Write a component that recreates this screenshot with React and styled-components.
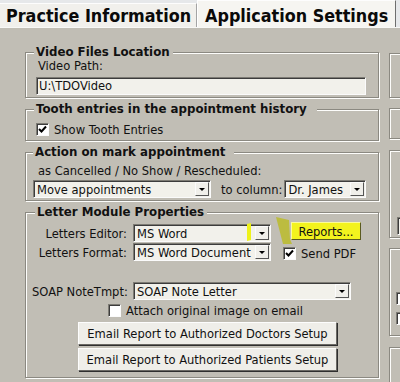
import React from "react";
import styled, { createGlobalStyle } from "styled-components";

const GlobalStyle = createGlobalStyle`
  html, body {
    margin: 0;
    padding: 0;
    background: #c1beb5;
  }
  body {
    font-family: "DejaVu Sans Condensed", "DejaVu Sans", sans-serif;
    font-size: 12.8px;
    color: #111;
    overflow: hidden;
  }
`;

function App() {
    return (
        <Window>
            <GlobalStyle />
            <TabStrip>
                <Tab>Practice Information</Tab>
                <Tab $active>Application Settings</Tab>
            </TabStrip>
            <Content>
                <LeftColumn>
                    <GroupBox $pb={2}>
                        <Legend>Video Files Location</Legend>
                        <FieldLabel>Video Path:</FieldLabel>
                        <TextInput $w={330}>U:\TDOVideo</TextInput>
                    </GroupBox>

                    <GroupBox $pb={3}>
                        <Legend $trail={10}>Tooth entries in the appointment history</Legend>
                        <CheckRow $mt={6} $ml={2}>
                            <CheckBox checked />
                            Show Tooth Entries
                        </CheckRow>
                    </GroupBox>

                    <GroupBox $pb={2} $pl={7}>
                        <Legend $trail={9}>Action on mark appointment</Legend>
                        <SubLabel>as Cancelled / No Show / Rescheduled:</SubLabel>
                        <ActionRow>
                            <Select $w={178} value="Move appointments" />
                            <InlineLabel>to column:</InlineLabel>
                            <Select $w={82} value="Dr. James" />
                        </ActionRow>
                    </GroupBox>

                    <GroupBox $pb={6} $pl={6}>
                        <Legend $indent={3}>Letter Module Properties</Legend>
                        <LetterTop>
                            <FormGrid>
                                <RowLabel>Letters Editor:</RowLabel>
                                <Select $w={138} value="MS Word" />
                                <RowLabel>Letters Format:</RowLabel>
                                <Select $w={138} value="MS Word Document" />
                            </FormGrid>
                            <ReportSide>
                                <ReportsButton>Reports...</ReportsButton>
                                <CheckRow $mt={6}>
                                    <CheckBox checked />
                                    Send PDF
                                </CheckRow>
                            </ReportSide>
                        </LetterTop>
                        <FormGrid $mt={21}>
                            <RowLabel>SOAP NoteTmpt:</RowLabel>
                            <Select $w={218} value="SOAP Note Letter" />
                        </FormGrid>
                        <CheckRow $mt={3} $ml={76}>
                            <CheckBox />
                            Attach original image on email
                        </CheckRow>
                        <ButtonStack>
                            <PushButton>Email Report to Authorized Doctors Setup</PushButton>
                            <PushButton>Email Report to Authorized Patients Setup</PushButton>
                        </ButtonStack>
                        <Highlighter viewBox="0 0 60 40" aria-hidden="true">
                            <path d="M0 11 L4 10 L4 27 L0 28 Z" fill="#eef21a" />
                            <path d="M29 4 L42 7 L43 26 L45 31 L36 31 Z" fill="#bcbc36" opacity="0.92" />
                        </Highlighter>
                    </GroupBox>
                </LeftColumn>

                <RightColumn>
                    <GroupBox as="div" $h={45} $mt={8} />
                    <GroupBox as="div" $h={31} $mt={10} />
                    <GroupBox as="div" $h={88} $mt={11} $pl={0}>
                        <SideSelect />
                    </GroupBox>
                    <GroupBox as="div" $h={88} $mt={10} $pl={0}>
                        <SideChecks>
                            <CheckBox />
                            <CheckBox />
                        </SideChecks>
                    </GroupBox>
                    <GroupBox as="div" $h={60} $mt={11} />
                </RightColumn>
            </Content>
        </Window>
    );
}

function Select({ $w, value }) {
    return (
        <SelectField $w={$w}>
            <SelectValue>{value}</SelectValue>
            <DropButton>
                <Arrow />
            </DropButton>
        </SelectField>
    );
}

function CheckBox({ checked }) {
    return (
        <CheckFrame>
            {checked && (
                <svg width="9" height="9" viewBox="0 0 9 9">
                    <path d="M1 4 L3.5 6.5 L8 1.5" stroke="#000" strokeWidth="2" fill="none" />
                </svg>
            )}
        </CheckFrame>
    );
}

const Window = styled.div`
    width: 400px;
    height: 382px;
    display: flex;
    flex-direction: column;
    overflow: hidden;
    background: #c1beb5;
`;

const TabStrip = styled.div`
    display: flex;
    align-items: flex-end;
    height: 27px;
    background: #e6e8ea;
    flex-shrink: 0;
`;

const Tab = styled.div`
    box-sizing: border-box;
    height: ${(p) => (p.$active ? 27 : 24)}px;
    padding: ${(p) => (p.$active ? "3px 7px 0 7px" : "0 5px 0 6px")};
    display: flex;
    align-items: center;
    font-size: 17.8px;
    font-weight: bold;
    color: #0a0a0a;
    background: ${(p) => (p.$active ? "#f6f5f1" : "#f1f0ec")};
    border-top: 1px solid #fdfdfd;
    border-right: 1px solid ${(p) => (p.$active ? "#6e6e6e" : "#a4a4a4")};
    border-left: ${(p) => (p.$active ? "1px solid #fff" : "none")};
    white-space: nowrap;
`;

const Content = styled.div`
    flex: 1;
    display: flex;
    gap: 10px;
    padding: 17px 0 0 25px;
    border-top: 1px solid #f8f8f6;
    min-height: 0;
`;

const LeftColumn = styled.div`
    width: 354px;
    flex-shrink: 0;
    display: flex;
    flex-direction: column;
    gap: 4px;
`;

const RightColumn = styled.div`
    width: 220px;
    flex-shrink: 0;
    display: flex;
    flex-direction: column;
`;

const GroupBox = styled.fieldset`
    position: relative;
    box-sizing: border-box;
    margin: ${(p) => (p.$mt ? `${p.$mt}px 0 0` : 0)};
    padding: 0 8px ${(p) => p.$pb || 0}px ${(p) => p.$pl ?? 8}px;
    min-width: 0;
    height: ${(p) => (p.$h ? `${p.$h}px` : "auto")};
    border: 1px solid #8b8981;
    box-shadow: 1px 1px 0 #fdfdfb, inset 1px 1px 0 #fdfdfb;
    flex-shrink: 0;
`;

const Legend = styled.legend`
    margin-left: ${(p) => p.$indent || 0}px;
    padding: 0 ${(p) => p.$trail || 3}px 0 2px;
    line-height: 14px;
    font-family: "DejaVu Sans", sans-serif;
    font-size: 11.8px;
    font-weight: bold;
    background: #c1beb5;
`;

const FieldLabel = styled.div`
    line-height: 14px;
    margin-left: 4px;
`;

const SubLabel = styled.div`
    line-height: 14px;
    margin: 5px 0 0 5px;
`;

const TextInput = styled.div`
    box-sizing: border-box;
    width: ${(p) => p.$w}px;
    height: 18px;
    margin: 4px 0 0 2px;
    padding: 0 2px;
    line-height: 16px;
    background: #f2f1eb;
    border: 1px solid;
    border-color: #7d7b74 #fbfbfb #fbfbfb #7d7b74;
    box-shadow: inset 1px 1px 0 #3c3c3c;
`;

const CheckRow = styled.label`
    display: flex;
    align-items: center;
    gap: 5px;
    height: 15px;
    margin: ${(p) => p.$mt || 0}px 0 0 ${(p) => p.$ml || 0}px;
    white-space: nowrap;
`;

const CheckFrame = styled.span`
    box-sizing: border-box;
    width: 13px;
    height: 13px;
    flex-shrink: 0;
    display: flex;
    align-items: center;
    justify-content: center;
    background: #fff;
    border: 1px solid;
    border-color: #7d7b74 #fbfbfb #fbfbfb #7d7b74;
    box-shadow: inset 1px 1px 0 #3c3c3c;
`;

const ActionRow = styled.div`
    display: flex;
    align-items: center;
    margin-top: 2px;
`;

const InlineLabel = styled.span`
    margin: 0 2px 0 10px;
    white-space: nowrap;
`;

const SelectField = styled.div`
    box-sizing: border-box;
    width: ${(p) => p.$w}px;
    height: 18px;
    display: flex;
    align-items: center;
    padding: 1px;
    background: #f2f1eb;
    border: 1px solid;
    border-color: #7d7b74 #fbfbfb #fbfbfb #7d7b74;
    box-shadow: inset 1px 1px 0 #3c3c3c;
`;

const SelectValue = styled.span`
    flex: 1;
    padding-left: 2px;
    white-space: nowrap;
    overflow: hidden;
`;

const DropButton = styled.span`
    box-sizing: border-box;
    width: 14px;
    height: 14px;
    flex-shrink: 0;
    display: flex;
    align-items: center;
    justify-content: center;
    background: #f0efea;
    border: 1px solid;
    border-color: #fbfbfb #555 #555 #fbfbfb;
`;

const Arrow = styled.span`
    width: 0;
    height: 0;
    border-left: 3px solid transparent;
    border-right: 3px solid transparent;
    border-top: 3px solid #000;
`;

const LetterTop = styled.div`
    display: flex;
    margin-top: 5px;
`;

const FormGrid = styled.div`
    display: grid;
    grid-template-columns: 95px auto;
    column-gap: 6px;
    row-gap: 1px;
    align-items: center;
    justify-content: start;
    margin-top: ${(p) => p.$mt || 0}px;
`;

const RowLabel = styled.span`
    text-align: right;
    white-space: nowrap;
`;

const ReportSide = styled.div`
    display: flex;
    flex-direction: column;
    margin: -2px 0 0 12px;
`;

const ReportsButton = styled.button`
    box-sizing: border-box;
    width: 70px;
    height: 18px;
    margin-left: 8px;
    padding: 0;
    font: inherit;
    color: #111;
    background: #f3f31e;
    border: 1px solid;
    border-color: #fbfb9a #5a5a20 #5a5a20 #fbfb9a;
`;

const ButtonStack = styled.div`
    display: flex;
    flex-direction: column;
    gap: 3px;
    margin: 4px 0 0 46px;
`;

const PushButton = styled.button`
    box-sizing: border-box;
    width: 259px;
    height: 23px;
    padding: 0;
    font: inherit;
    color: #111;
    background: #efeee9;
    border: 1px solid;
    border-color: #fdfdfd #6b6964 #6b6964 #fdfdfd;
    box-shadow: 1px 1px 0 #2f2f2f;
`;

const Highlighter = styled.svg`
    position: absolute;
    left: 221px;
    top: -6px;
    width: 60px;
    height: 40px;
    pointer-events: none;
`;

const SideSelect = styled.div`
    width: 120px;
    height: 16px;
    margin: 66px 0 0 7px;
    background: #f2f1eb;
    border: 1px solid;
    border-color: #7d7b74 #fbfbfb #fbfbfb #7d7b74;
    box-shadow: inset 1px 1px 0 #3c3c3c;
`;

const SideChecks = styled.div`
    display: flex;
    flex-direction: column;
    gap: 7px;
    margin: 43px 0 0 6px;
`;

export default App;
